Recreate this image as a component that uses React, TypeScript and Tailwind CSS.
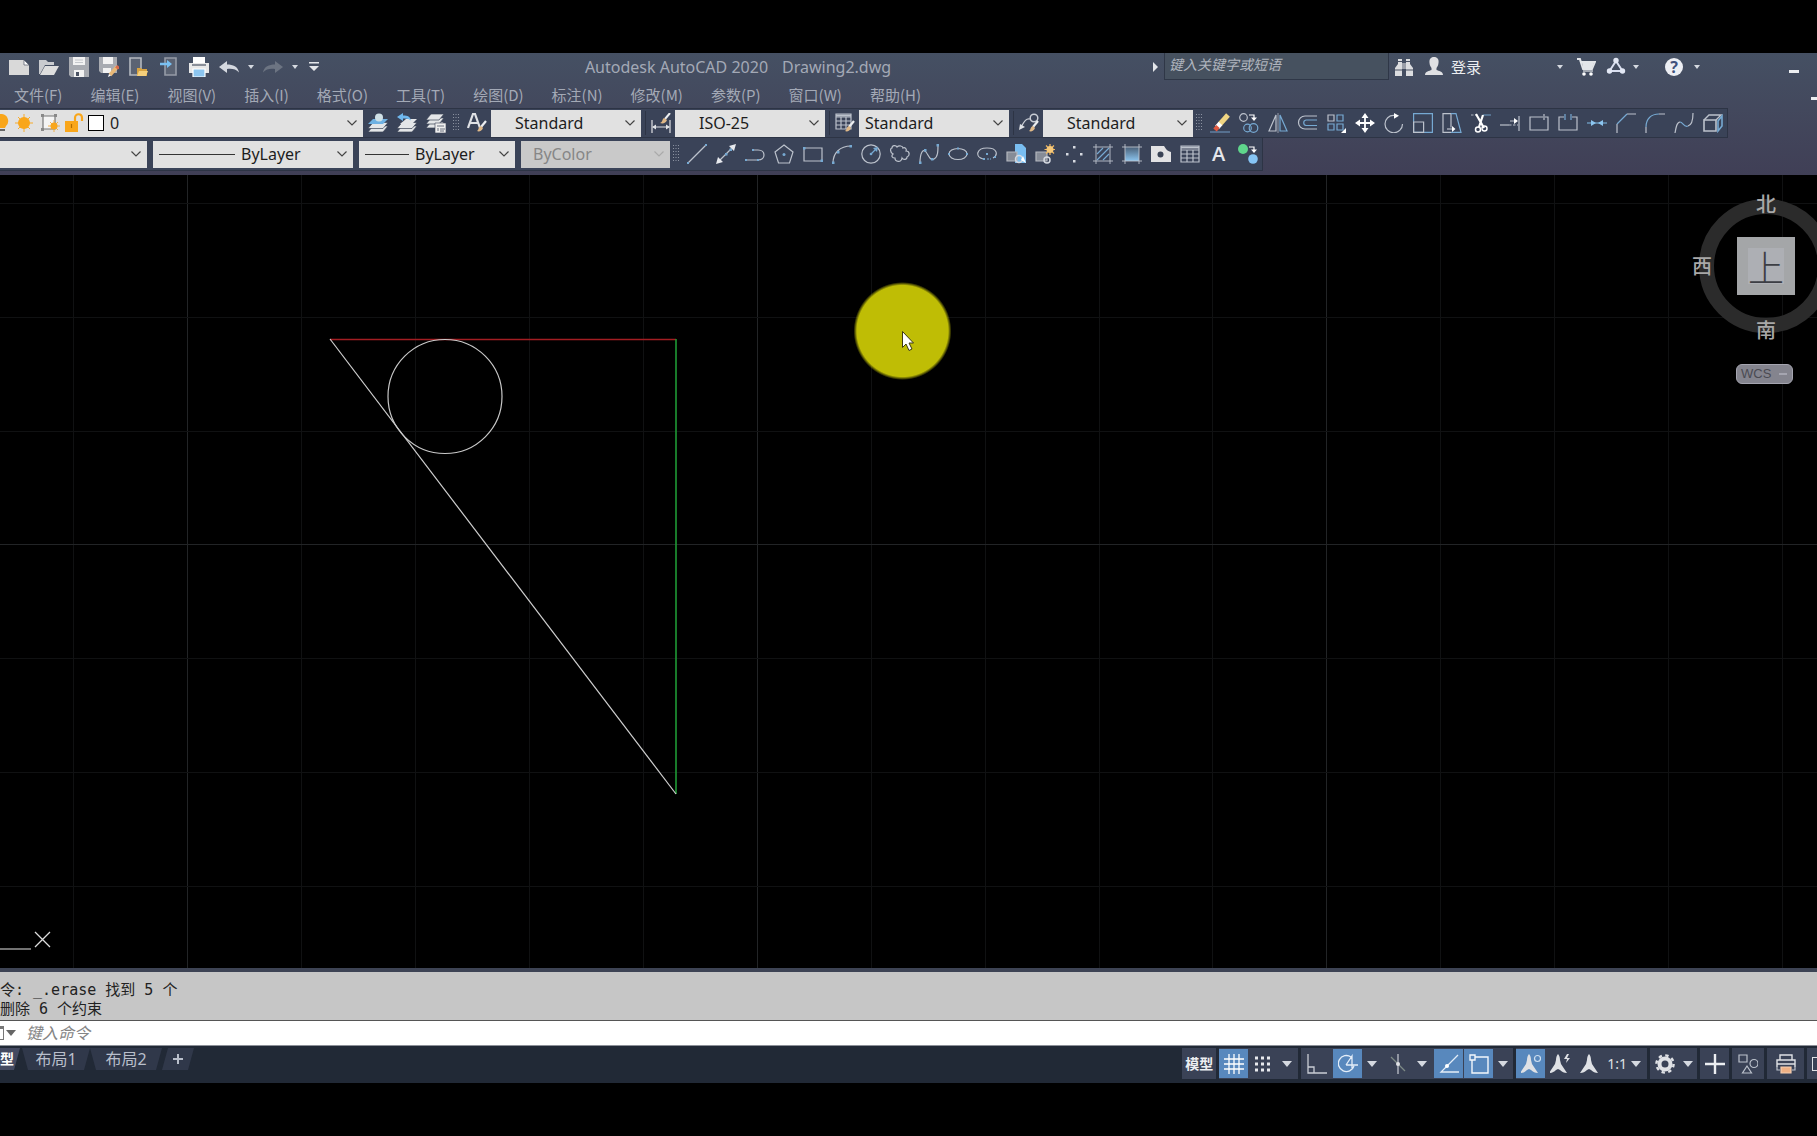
import type { ReactNode } from "react";

const LIGHT = "#bcc2cc";
const BLUE = "#76a9d2";

function Icon({ children, size = "size-5" }: { children: ReactNode; size?: string }) {
  return (
    <svg viewBox="0 0 20 20" className={`${size} shrink-0`} fill="none" stroke={LIGHT} strokeWidth="1.2">
      {children}
    </svg>
  );
}

function Caret() {
  return (
    <svg viewBox="0 0 10 6" className="h-1.5 w-2.5" fill="#d5d9e0">
      <path d="M0 0h10L5 6z" />
    </svg>
  );
}

function SmallCaret() {
  return (
    <svg viewBox="0 0 6 4" className="h-1 w-1.5" fill="#d5d9e0">
      <path d="M0 0h6L3 4z" />
    </svg>
  );
}

const brush = (
  <>
    <path d="M19 8l-5 6" stroke="#eceef0" strokeWidth="2.2" />
    <path d="M14 13l2 2c-1 3-4 4-6 3 2-1 1-4 4-5z" fill="#e0b988" stroke="none" />
  </>
);

const layers = (
  <g fill="#e4e6e8" stroke="#394255" strokeWidth=".7">
    <path d="M5 13h15l-5 6H0z" />
    <path d="M5 9.500h15l-5 6H0z" />
  </g>
);

const quick = [
  {
    name: "新建",
    icon: (
      <Icon>
        <path d="M0 3h15l5 5v10H0z" fill="#d9d9d9" stroke="none" />
        <path d="M15 3v5h5z" fill="#fff" stroke="#394255" strokeWidth=".6" />
      </Icon>
    ),
  },
  {
    name: "打开",
    icon: (
      <Icon>
        <path d="M0 3h7l2 2h6v3H6L1 17H0z" fill="#c9cbcf" stroke="none" />
        <path d="M6 9h14l-5 9H1z" fill="#dedede" stroke="none" />
      </Icon>
    ),
  },
  {
    name: "保存",
    icon: (
      <Icon>
        <path d="M0 0h20v20H2l-2-2z" fill="#a8abb1" stroke="none" />
        <path d="M4 0h12v8H4zM5 13h10v7H5z" fill="#f2f2f2" stroke="none" />
        <path d="M7 15h3v4H7z" fill="#4a5263" stroke="none" />
        <path d="M6 3h8M6 5.500h8" stroke="#b9bcc2" strokeWidth=".8" />
      </Icon>
    ),
  },
  {
    name: "另存为",
    icon: (
      <Icon>
        <path d="M0 0h18v16H2l-2-2z" fill="#a8abb1" stroke="none" />
        <path d="M4 0h10v7H4zM4 11h8v5H4z" fill="#f2f2f2" stroke="none" />
        <path d="M18 10l-7 8" stroke="#e8b877" strokeWidth="3.500" />
        <path d="M19.500 9l-2 2.500" stroke="#d96c4b" strokeWidth="3.500" />
        <path d="M9 20l1-3 2 1.500z" fill="#fff" stroke="none" />
      </Icon>
    ),
  },
  {
    name: "从移动设备打开",
    icon: (
      <Icon>
        <path d="M1 1h11v17H1z" fill="#5b6373" stroke="#b4b8bf" strokeWidth="1.600" />
        <path d="M8 11h4l1 1h5v7H8z" fill="#d9a441" stroke="none" />
        <path d="M10 14h9l-2 5H8z" fill="#f5cf7b" stroke="none" />
      </Icon>
    ),
  },
  {
    name: "保存到移动设备",
    icon: (
      <Icon>
        <path d="M6 1h11v17H6z" fill="#5b6373" stroke="#959ba7" strokeWidth="1.600" />
        <path d="M1 7h8" stroke="#79c0f2" strokeWidth="2.500" />
        <path d="M8 3l5 4-5 4z" fill="#79c0f2" stroke="none" />
      </Icon>
    ),
  },
  {
    name: "打印",
    icon: (
      <Icon>
        <path d="M4 0h12v6H4z" fill="#fff" stroke="none" />
        <path d="M0 6h20v10H0z" fill="#e8e8e8" stroke="none" />
        <path d="M3 8h14" stroke="#4a5263" />
        <path d="M4 12h12v8H4z" fill="#8cc5ef" stroke="#fff" />
      </Icon>
    ),
  },
  {
    name: "放弃",
    icon: (
      <Icon>
        <path d="M0 10l8-6v3.500c6 0 11 2 12 8-3-3.500-7-4-12-3.500V16z" fill="#d5d9e0" stroke="none" />
      </Icon>
    ),
  },
];

const menus = [
  "文件(F)",
  "编辑(E)",
  "视图(V)",
  "插入(I)",
  "格式(O)",
  "工具(T)",
  "绘图(D)",
  "标注(N)",
  "修改(M)",
  "参数(P)",
  "窗口(W)",
  "帮助(H)",
];

const layerTools = [
  {
    name: "将对象的图层置为当前",
    icon: (
      <Icon>
        {layers}
        <path d="M5 6h15l-5 5H0z" fill="#6fb1e2" stroke="none" />
        <circle cx="11" cy="4.500" r="4" fill="#cfe0e6" stroke="none" />
      </Icon>
    ),
  },
  {
    name: "上一个图层",
    icon: (
      <Icon>
        {layers}
        <path d="M9 6h11l-5 5H3z" fill="#e4e6e8" stroke="none" />
        <path d="M0 4l6-4v2.500c5 0 7 1 8 5-3-2-5-2-8-2V8z" fill="#6fb8ee" stroke="none" />
      </Icon>
    ),
  },
  {
    name: "图层特性管理器",
    icon: (
      <Icon>
        <g fill="#e4e6e8" stroke="#394255" strokeWidth=".7">
          <path d="M5 9h13l-5 6H0z" />
          <path d="M5 5h13l-5 6H0z" />
          <path d="M5 1h13l-5 6H0z" />
        </g>
        <path d="M9 10h11v10H9z" fill="#eee" stroke="#394255" strokeWidth=".6" />
        <path d="M11 13h7M12 15v3M14 16h5M14 18h4" stroke="#5b6373" strokeWidth=".9" />
      </Icon>
    ),
  },
];

const modifyTools = [
  {
    name: "删除",
    icon: (
      <Icon>
        <path d="M0 19h20" stroke="#6a8fb5" />
        <path d="M18 2l-8 9" stroke="#f0d582" strokeWidth="5" />
        <path d="M10.500 10.500L7 14.500" stroke="#fff" strokeWidth="5" />
        <path d="M8 13.500L5 17" stroke="#e0583f" strokeWidth="4.500" />
      </Icon>
    ),
  },
  {
    name: "复制",
    icon: (
      <Icon>
        <circle cx="4.500" cy="4.500" r="3.800" />
        <circle cx="8.500" cy="15" r="3.800" stroke={BLUE} />
        <circle cx="14.500" cy="15" r="4.300" stroke={BLUE} />
        <path d="M10 2h5v4" stroke="#fff" />
        <path d="M12 4.500h6L15 8z" fill="#fff" stroke="none" />
      </Icon>
    ),
  },
  {
    name: "镜像",
    icon: (
      <Icon>
        <path d="M8 2v16H1z" />
        <path d="M12 2v16h7z" stroke={BLUE} />
        <path d="M10 0v20" strokeWidth=".7" />
      </Icon>
    ),
  },
  {
    name: "偏移",
    icon: (
      <Icon>
        <path d="M20 3H8a6.500 6.500 0 000 13h12" />
        <path d="M20 7H9a2.800 2.800 0 000 5.500h11" stroke={BLUE} />
      </Icon>
    ),
  },
  {
    name: "阵列",
    icon: (
      <Icon>
        <path d="M2 2h6v6H2z" />
        <path d="M11 2h6v6h-6zM2 11h6v6H2zM11 11h6v6h-6z" stroke={BLUE} />
        <path d="M20 15v5h-5z" fill="#fff" stroke="none" />
      </Icon>
    ),
  },
  {
    name: "移动",
    icon: (
      <Icon>
        <path d="M10 2v16M2 10h16" stroke="#fff" strokeWidth="1.800" />
        <path d="M10 0l3.500 5h-7zM10 20l3.500-5h-7zM0 10l5-3.500v7zM20 10l-5-3.500v7z" fill="#fff" stroke="none" />
      </Icon>
    ),
  },
  {
    name: "旋转",
    icon: (
      <Icon>
        <path d="M10.500 2.500C5 2 1 6 1 11a8.500 8.500 0 0017.500 0" />
        <path d="M10 0l5 2.700-5 3z" fill="#fff" stroke="none" />
      </Icon>
    ),
  },
  {
    name: "缩放",
    icon: (
      <Icon>
        <path d="M.6.6h18.800v18.800H.6z" stroke={BLUE} />
        <path d="M.6 9h10v10.400H.6z" />
      </Icon>
    ),
  },
  {
    name: "拉伸",
    icon: (
      <Icon>
        <path d="M9 .6H1v18.800h8M9 .6v14" />
        <path d="M9 .6h5l5 18.800H9" stroke={BLUE} />
        <path d="M5 16h6" />
        <path d="M10 13l3.500 3-3.500 3z" fill="#fff" stroke="none" />
      </Icon>
    ),
  },
  {
    name: "修剪",
    icon: (
      <Icon>
        <path d="M0 2h8" strokeDasharray="2.500 1.500" strokeWidth=".9" />
        <path d="M12 2h8" strokeWidth=".9" stroke={BLUE} />
        <path d="M5 1l8 14M12 2L8 14" stroke="#fff" strokeWidth="2.200" />
        <circle cx="7" cy="16.500" r="2.500" stroke="#fff" strokeWidth="1.500" />
        <circle cx="13.500" cy="15.500" r="2.500" stroke="#fff" strokeWidth="1.500" />
      </Icon>
    ),
  },
  {
    name: "延伸",
    icon: (
      <Icon>
        <path d="M19 3v15M10 8h5" />
        <path d="M14 5l4 3-4 3z" fill="#fff" stroke="none" />
        <path d="M0 12h9" />
        <path d="M9 12h9" strokeDasharray="2.500 1.500" />
      </Icon>
    ),
  },
  {
    name: "打断于点",
    icon: (
      <Icon>
        <path d="M14 4H1v13h18V4h-3M15 1v6" />
      </Icon>
    ),
  },
  {
    name: "打断",
    icon: (
      <Icon>
        <path d="M6 4H1v13h18V4h-5" />
        <path d="M7 1v6M13 1v6" stroke={BLUE} />
      </Icon>
    ),
  },
  {
    name: "合并",
    icon: (
      <Icon>
        <path d="M0 10h20" stroke={BLUE} />
        <path d="M4 7l5 3-5 3zM16 7l-5 3 5 3z" fill="#8cc5ef" stroke="none" />
      </Icon>
    ),
  },
  {
    name: "倒角",
    icon: (
      <Icon>
        <path d="M1 20v-9M11 1h9" />
        <path d="M1 11L11 1" stroke={BLUE} />
      </Icon>
    ),
  },
  {
    name: "圆角",
    icon: (
      <Icon>
        <path d="M1 20v-6M14 1h6" />
        <path d="M1 14C1 6 6 1 14 1" stroke={BLUE} />
      </Icon>
    ),
  },
  {
    name: "光顺曲线",
    icon: (
      <Icon>
        <path d="M1 20c1-6 2-11 5-11M14 13c4-1 5-6 5-13" />
        <path d="M6 9c3 0 4 6 8 4" stroke={BLUE} />
      </Icon>
    ),
  },
  {
    name: "分解",
    icon: (
      <Icon>
        <path d="M1 7h12v11H1z" strokeWidth="1.600" />
        <path d="M1 7l5-5h12l-5 5" strokeWidth="1.400" />
        <path d="M15 8l4-5v10l-4 5z" stroke={BLUE} strokeWidth="1.600" />
      </Icon>
    ),
  },
];

const drawTools = [
  {
    name: "直线",
    icon: (
      <Icon>
        <path d="M1 19L19 1" />
        <path d="M0 18h2v2H0zM18 0h2v2h-2z" fill={BLUE} stroke="none" />
      </Icon>
    ),
  },
  {
    name: "构造线",
    icon: (
      <Icon>
        <path d="M3 17L17 3" />
        <path d="M20 0l-2 7-5-5zM0 20l2-7 5 5z" fill="#e8eaee" stroke="none" />
        <path d="M9 9h2.500v2.500H9zM13.500 4.500H16V7h-2.500z" fill={BLUE} stroke="none" />
      </Icon>
    ),
  },
  {
    name: "多段线",
    icon: (
      <Icon>
        <path d="M1 16h12c8 0 8-10 0-10H9" />
        <path d="M0 15h2v2H0zM12 15h2v2h-2zM7 5h2v2H7z" fill={BLUE} stroke="none" />
      </Icon>
    ),
  },
  {
    name: "多边形",
    icon: (
      <Icon>
        <path d="M10 1l9 7-3.500 11h-11L1 8z" />
        <circle cx="10" cy="10.500" r="1.500" fill={BLUE} stroke="none" />
      </Icon>
    ),
  },
  {
    name: "矩形",
    icon: (
      <Icon>
        <path d="M1 4h18v13H1z" />
        <path d="M0 3h2.500v2.500H0zM17.500 15.500H20V18h-2.500z" fill={BLUE} stroke="none" />
      </Icon>
    ),
  },
  {
    name: "圆弧",
    icon: (
      <Icon>
        <path d="M1 19C1 9 8 2 19 2" />
        <path d="M0 17.500h2.500V20H0zM5 7h2.500v2.500H5zM17.500 1H20v2.500h-2.500z" fill={BLUE} stroke="none" />
      </Icon>
    ),
  },
  {
    name: "圆",
    icon: (
      <Icon>
        <circle cx="10" cy="10" r="9.200" />
        <path d="M10 10l5-5" stroke={BLUE} />
        <circle cx="10" cy="10" r="1.300" fill={BLUE} stroke="none" />
        <path d="M17 3l-1 5-4-4z" fill={BLUE} stroke="none" />
      </Icon>
    ),
  },
  {
    name: "修订云线",
    icon: (
      <Icon>
        <path d="M3 10C0 9 0 4 2 4c0-3 4-3 5-1 2-2 6-1 6 1 2-1 4 1 3 3 4 0 4 5 1 6 0 3-4 3-5 1-1 5-7 4-7 0-3 0-4-2-2-4z" />
      </Icon>
    ),
  },
  {
    name: "样条曲线",
    icon: (
      <Icon>
        <path d="M1 19C1 9 4 4 7 8s4 9 8 7 4-8 4-14" />
        <path d="M0 17.500h2.500V20H0zM5 5h2.500v2.500H5zM12 14h2.500v2.500H12zM17.500 0H20v2.500h-2.500z" fill={BLUE} stroke="none" />
      </Icon>
    ),
  },
  {
    name: "椭圆",
    icon: (
      <Icon>
        <ellipse cx="10" cy="10" rx="9" ry="5.500" />
        <path d="M0 9h2v2H0zM18 9h2v2h-2zM9 3.500h2v2H9z" fill={BLUE} stroke="none" />
      </Icon>
    ),
  },
  {
    name: "椭圆弧",
    icon: (
      <Icon>
        <path d="M6 15C-2 13-1 4 10 4s11 7 6 10" />
        <path d="M9 9h2v2H9zM17 12h2v2h-2zM6 14h2v2H6z" fill={BLUE} stroke="none" />
        <path d="M10 15h4" stroke={BLUE} strokeDasharray="2 1" />
      </Icon>
    ),
  },
  {
    name: "插入块",
    icon: (
      <Icon>
        <path d="M9 0h7l4 4v15H9z" fill="#79bdf0" stroke="none" />
        <path d="M1 8h10v9H1z" fill="#868c97" stroke="#b4b8bf" />
        <circle cx="13" cy="15" r="3.500" stroke="#d5d9e0" strokeWidth="1.500" />
        <path d="M17 12l3 7-5-3z" fill="#fff" stroke="none" />
      </Icon>
    ),
  },
  {
    name: "创建块",
    icon: (
      <Icon>
        <path d="M1 8h11v9H1z" fill="#868c97" stroke="#b4b8bf" />
        <circle cx="12" cy="16" r="3" stroke="#d5d9e0" strokeWidth="1.500" />
        <path d="M15 0v11M9.500 5.500h11M11 1.500l8 8M19 1.500l-8 8" stroke="#f0b860" />
        <circle cx="15" cy="5.500" r="3.500" fill="#f6c879" stroke="none" />
      </Icon>
    ),
  },
  {
    name: "点",
    icon: (
      <Icon>
        <path d="M9 2h2.500v2.500H9zM2 9h2.500v2.500H2zM16 9h2.500v2.500H16zM9 16h2.500v2.500H9z" fill="#d5d9e0" stroke="none" />
      </Icon>
    ),
  },
  {
    name: "图案填充",
    icon: (
      <Icon>
        <path d="M3 0v20M17 0v20M0 3h20M0 17h20" strokeWidth=".9" />
        <path d="M4 10l6-6M4 16L16 4M10 16l6-6" stroke={BLUE} />
      </Icon>
    ),
  },
  {
    name: "渐变色",
    icon: (
      <Icon>
        <defs>
          <linearGradient id="fade" x1="0" y1="1" x2="0" y2="0">
            <stop offset="0" stopColor="#8cc5ef" />
            <stop offset="1" stopColor="#4a6078" />
          </linearGradient>
        </defs>
        <path d="M3 3h14v14H3z" fill="url(#fade)" stroke="none" />
        <path d="M3 0v20M17 0v20M0 3h20M0 17h20" strokeWidth=".9" />
      </Icon>
    ),
  },
  {
    name: "面域",
    icon: (
      <Icon>
        <path d="M0 2h13c2 3 3 5 7 6v10H0z" fill="#e2e2e4" stroke="none" />
        <circle cx="9.500" cy="10.500" r="3" fill="#394255" stroke="none" />
      </Icon>
    ),
  },
  {
    name: "表格",
    icon: (
      <Icon>
        <path d="M1 2h18v16H1zM1 6h18M1 10h18M1 14h18M7 6v12M13 6v12" />
        <path d="M1 3.500h18" strokeWidth="2" />
      </Icon>
    ),
  },
  { name: "多行文字", icon: <span className="font-['Open_Sans','Noto_Sans',sans-serif] text-xl leading-5 font-semibold text-gray-200">A</span> },
  {
    name: "添加选定对象",
    icon: (
      <Icon>
        <circle cx="5" cy="5" r="5" fill="#5fd68c" stroke="none" />
        <circle cx="15" cy="15" r="4.800" fill="#86c5f5" stroke="none" />
        <path d="M11 3h5v3" stroke="#fff" />
        <path d="M13 5.500h6L16 9z" fill="#fff" stroke="none" />
      </Icon>
    ),
  },
];

function Tool({ name, children }: { name: string; children: ReactNode }) {
  return (
    <button type="button" aria-label={name} className="flex h-7 w-[29px] shrink-0 items-center justify-center">
      {children}
    </button>
  );
}

function Grip() {
  return (
    <svg viewBox="0 0 6 18" className="mx-[3px] h-[18px] w-1.5 shrink-0" fill="#8c93a1">
      {[0, 3, 6, 9, 12, 15].map((y) => (
        <path key={y} d={`M0 ${y}h1v1H0zM2.500 ${y}h1v1h-1zM5 ${y}h1v1H5z`} />
      ))}
    </svg>
  );
}

type ComboProps = {
  label: string;
  value: string;
  width: string;
  pad?: string;
  disabled?: boolean;
  children?: ReactNode;
};

function Combo({ label, value, width, pad = "pl-6", disabled = false, children }: ComboProps) {
  return (
    <div className={`relative flex h-[27px] shrink-0 items-center ${width} ${disabled ? "bg-[#c9c9c9]" : "bg-[#e1e1e1]"}`}>
      {children}
      <select
        aria-label={label}
        disabled={disabled}
        className={`h-full min-w-0 flex-1 appearance-none text-base leading-5 opacity-100 ${pad} ${disabled ? "text-[#868686]" : "text-[#1d1d1d]"}`}
      >
        <option>{value}</option>
      </select>
      <svg
        viewBox="0 0 10 6"
        className="pointer-events-none absolute right-1.5 h-1.5 w-2.5"
        fill="none"
        stroke={disabled ? "#aaa" : "#444"}
        strokeWidth="1.200"
      >
        <path d="M.5.5L5 5 9.500.5" />
      </svg>
    </div>
  );
}

function TitleBar() {
  return (
    <header className="flex h-[27px] items-center pl-1">
      {quick.map((q) => (
        <button key={q.name} type="button" aria-label={q.name} className="flex w-[30px] justify-center">
          {q.icon}
        </button>
      ))}
      <button type="button" aria-label="放弃列表" className="flex w-3.5 justify-center">
        <SmallCaret />
      </button>
      <button type="button" aria-label="重做" className="flex w-[30px] justify-center">
        <Icon>
          <path d="M20 10l-8-6v3.500C6 7.500 1 9.500 0 15.500c3-3.500 7-4 12-3.500V16z" fill="#6c7482" stroke="none" />
        </Icon>
      </button>
      <button type="button" aria-label="重做列表" className="flex w-3.5 justify-center">
        <SmallCaret />
      </button>
      <button type="button" aria-label="自定义快速访问工具栏" className="flex w-6 justify-center">
        <svg viewBox="0 0 10 9" className="h-[9px] w-2.5" fill="#e3e6ea">
          <path d="M0 0h10v1.500H0zM0 4h10L5 9z" />
        </svg>
      </button>

      <h1 className="flex flex-1 justify-center gap-3.5 pl-1 text-base leading-6 whitespace-nowrap text-[#a3a9b6]">
        <span>Autodesk AutoCAD 2020</span>
        <span>Drawing2.dwg</span>
      </h1>

      <button type="button" aria-label="展开搜索" className="flex w-[18px] justify-center">
        <svg viewBox="0 0 5 10" className="h-2.5 w-[5px]" fill="#e3e6ea">
          <path d="M0 0l5 5-5 5z" />
        </svg>
      </button>
      <input
        type="text"
        aria-label="搜索"
        placeholder="键入关键字或短语"
        className="h-full w-[225px] border border-t-0 border-[#2f3747] bg-[#46515f] px-1 pb-1 text-sm italic placeholder:text-[#b0b5be]"
      />
      <button type="button" aria-label="查找" className="flex w-[30px] justify-center">
        <Icon>
          <path d="M4 2h4v17H1v-8l3-4zM12 2h4v5l3 4v8h-7z" fill="#dcdde0" stroke="none" />
          <path d="M8 6h4v6H8z" fill="#9a9ea8" stroke="none" />
          <path d="M1 13h7M12 13h7M4 4.500h4M12 4.500h4" stroke="#4a5263" />
        </Icon>
      </button>
      <button type="button" className="flex w-[134px] items-center gap-[7px] pl-[5px] text-[15px] leading-5 text-[#eceef1]">
        <Icon>
          <path d="M10 0c3.500 0 5 2.500 4.500 6-.3 3-1.500 4-2 5v2c2 1 6.500 1 6.500 5H1c0-4 4.500-4 6.500-5v-2c-.5-1-1.700-2-2-5C5 2.500 6.500 0 10 0z" fill="#dfe0e3" stroke="none" />
        </Icon>
        登录
      </button>
      <button type="button" aria-label="登录列表" className="flex w-3.5 justify-center">
        <SmallCaret />
      </button>
      <button type="button" aria-label="应用商店" className="ml-1 flex w-[30px] justify-center">
        <Icon>
          <path d="M1 2h3l1 3h14l-3 7H7L4 3" fill="none" stroke="#e3e6ea" strokeWidth="1.800" />
          <path d="M6 6h12l-2 5H7z" fill="#e3e6ea" stroke="none" />
          <path d="M7 14h10" stroke="#e3e6ea" />
          <circle cx="8" cy="17" r="1.800" fill="#fff" stroke="none" />
          <circle cx="15" cy="17" r="1.800" fill="#fff" stroke="none" />
        </Icon>
      </button>
      <button type="button" aria-label="保持连接" className="flex w-[30px] justify-center">
        <Icon>
          <path d="M10 4L3.500 14h13z" stroke="#d9dff0" strokeWidth="2" />
          <g fill="#e3e8f5" stroke="none">
            <circle cx="10" cy="3.500" r="2.700" />
            <circle cx="3.500" cy="14" r="2.700" />
            <circle cx="16.500" cy="14" r="2.700" />
          </g>
        </Icon>
      </button>
      <button type="button" aria-label="连接列表" className="flex w-2.5 justify-center">
        <SmallCaret />
      </button>
      <button type="button" aria-label="帮助" className="ml-[18px] flex w-[30px] justify-center">
        <span className="flex size-[18px] items-center justify-center rounded-full bg-[#eceef3] text-base leading-4 font-bold text-[#3f517c]">?</span>
      </button>
      <button type="button" aria-label="帮助列表" className="flex w-4 justify-center">
        <SmallCaret />
      </button>
      <button type="button" aria-label="最小化" className="mt-2.5 mr-3 ml-[78px] flex w-[22px] justify-center">
        <span className="h-[3px] w-2.5 bg-[#eceef1]" />
      </button>
    </header>
  );
}

function StylesBar() {
  return (
    <div className="flex h-[30px] w-fit items-center border-y border-r border-[#2d3445] bg-[#3a4358]">
      <Combo label="图层" value="0" width="w-[363px]" pad="pl-1.5">
        <svg viewBox="0 0 10 20" className="h-5 w-2.5" fill="#f9a61a">
          <path d="M2 1a7 7 0 014 12l-1 2H-2V1z" />
          <path d="M0 16h5v2H0z" fill="#666" />
        </svg>
        <span className="ml-1 flex">
          <Icon>
            <path d="M10 1v18M1 10h18M4 4l12 12M16 4L4 16" stroke="#f9a61a" strokeWidth=".9" />
            <circle cx="10" cy="10" r="6" fill="#f9a61a" stroke="none" />
          </Icon>
        </span>
        <span className="ml-1.5 flex">
          <Icon>
            <path d="M3 3h12v13H3z" fill="#f4f4f4" stroke="#777" />
            <path d="M1 1h3v3H1zM14 1h3v3h-3zM1 15h3v3H1z" fill="#888" stroke="none" />
            <path d="M14 7v12M8 13h12M10 9l8 8M18 9l-8 8" stroke="#f0a83a" strokeWidth=".9" />
            <circle cx="14" cy="13" r="3.500" fill="#f9a61a" stroke="none" />
          </Icon>
        </span>
        <span className="ml-1 flex">
          <Icon>
            <path d="M11 9V5c0-5 7-5 7 0v3" stroke="#f9a61a" strokeWidth="2.200" />
            <path d="M1 8h13v11H1z" fill="#f9a61a" stroke="none" />
            <path d="M7.500 11v4" stroke="#b36d00" />
          </Icon>
        </span>
        <span className="ml-1 size-4 border border-black bg-white" />
      </Combo>
      {layerTools.map((t) => (
        <Tool key={t.name} name={t.name}>
          {t.icon}
        </Tool>
      ))}
      <Grip />
      <Tool name="文字样式">
        <svg viewBox="0 0 20 20" className="size-5" fill="none">
          <path d="M1 15L6 1h2l5 14M3 10h8" stroke="#dfe1e5" strokeWidth="2.200" />
          {brush}
        </svg>
      </Tool>
      <Combo label="文字样式控制" value="Standard" width="w-[150px]" />
      <span className="ml-1 h-6 w-px bg-[#2d3445]" />
      <Tool name="标注样式">
        <Icon>
          <path d="M1 7v13M19 7v13M2 14h16" stroke="#dfe1e5" />
          <path d="M1 14l4-2.500v5zM19 14l-4-2.500v5z" fill="#dfe1e5" stroke="none" />
          <path d="M19 0l-5 6" stroke="#eceef0" strokeWidth="2" />
          <path d="M13 5l3 2c-1 3-4 4-7 3 3-1 2-4 4-5z" fill="#e0b988" stroke="none" />
        </Icon>
      </Tool>
      <Combo label="标注样式控制" value="ISO-25" width="w-[150px]" />
      <span className="ml-1 h-6 w-px bg-[#2d3445]" />
      <Tool name="表格样式">
        <Icon>
          <path d="M1 1h15v15H1zM1 4h15M1 8h15M1 12h15M6 4v12M11 4v12" />
          <path d="M1 2.500h15" strokeWidth="2" />
          {brush}
        </Icon>
      </Tool>
      <Combo label="表格样式控制" value="Standard" width="w-[150px]" pad="pl-1.5" />
      <span className="ml-1 h-6 w-px bg-[#2d3445]" />
      <Tool name="多重引线样式">
        <Icon>
          <circle cx="15" cy="5" r="3.800" stroke="#c9cdd5" strokeWidth="1.500" />
          <path d="M11 6C7 5 5 9 2 14" stroke="#c9cdd5" />
          <path d="M0 17l1-6 5 3z" fill="#dfe1e5" stroke="none" />
          {brush}
        </Icon>
      </Tool>
      <Combo label="多重引线样式控制" value="Standard" width="w-[150px]" />
      <Grip />
      {modifyTools.map((t) => (
        <Tool key={t.name} name={t.name}>
          {t.icon}
        </Tool>
      ))}
    </div>
  );
}

function PropertiesBar() {
  return (
    <div className="flex h-[33px] w-fit items-center border-b border-r border-[#2d3445] bg-[#3a4358]">
      <div className="flex gap-1.5">
        <Combo label="颜色控制" value="" width="w-[147px]" />
        <Combo label="线型控制" value="ByLayer" width="w-[200px]" pad="pl-1.5">
          <span className="ml-1.5 h-px w-[76px] bg-[#333]" />
        </Combo>
        <Combo label="线宽控制" value="ByLayer" width="w-[156px]" pad="pl-1.5">
          <span className="ml-1.5 h-px w-11 bg-[#333]" />
        </Combo>
        <Combo label="打印样式控制" value="ByColor" width="w-[149px]" pad="pl-3" disabled />
      </div>
      <Grip />
      {drawTools.map((t) => (
        <Tool key={t.name} name={t.name}>
          {t.icon}
        </Tool>
      ))}
    </div>
  );
}

// grid spacing 114, every fifth line is a major one
const columns = Array.from({ length: 16 }, (_, i) => ({ x: Math.round(73.4 + i * 113.9), major: i % 5 === 1 }));
const rows = Array.from({ length: 7 }, (_, i) => ({ y: Math.round(28 + i * 113.8), major: i === 3 }));

function ModelSpace() {
  return (
    <main className="relative min-h-0 flex-1 overflow-hidden bg-black">
      <svg className="absolute inset-0 h-full w-full" fill="none">
        <defs>
          <radialGradient id="spot">
            <stop offset="0.93" stopColor="#bfbd05" />
            <stop offset="1" stopColor="#bfbd05" stopOpacity="0" />
          </radialGradient>
        </defs>
        {columns.map((c) => (
          <path key={c.x} d={`M${c.x + 0.5} 0v2000`} stroke={c.major ? "#222426" : "#101112"} />
        ))}
        {rows.map((r) => (
          <path key={r.y} d={`M0 ${r.y + 0.5}h4000`} stroke={r.major ? "#222426" : "#101112"} />
        ))}
        <path d="M330 164.500h346" stroke="#a31d22" strokeWidth="1.400" />
        <path d="M676 164v455" stroke="#1f9a35" strokeWidth="1.600" />
        <path d="M330 164l346 455" stroke="#d0d0d0" strokeWidth="1.200" />
        <circle cx="445" cy="221.500" r="57" stroke="#c8c8c8" strokeWidth="1.200" />
        <path d="M0 774h31" stroke="#999" strokeWidth="1.500" />
        <path d="M35 757l15 15M50 757l-15 15" stroke="#ddd" strokeWidth="1.300" />
        <circle cx="902.500" cy="156" r="49" fill="url(#spot)" />
        <path d="M902.500 156.500v16l3.500-3.500 3 6.500 3-1.500-3-6h4.500z" fill="#fff" stroke="#3d3a12" />
      </svg>

      {/* view cube */}
      <div className="absolute top-6 -right-4 size-[134px] rounded-full border-[15px] border-[#2b2b2b]" />
      <div className="absolute top-[18px] right-[41px] flex w-[84px] flex-col text-xl leading-6 font-medium text-[#a8a8a8]">
        <span className="self-end">北</span>
        <span className="mt-[38px]">西</span>
        <span className="mt-10 self-end">南</span>
      </div>
      <button
        type="button"
        className="absolute top-[62px] right-[22px] flex size-[58px] items-center justify-center bg-[#a4a6a8]"
      >
        <span className="bg-[#adafb4] font-['Noto_Sans_CJK_SC',sans-serif] text-4xl leading-9 font-light text-[#3c3e44]">上</span>
      </button>
      <button
        type="button"
        className="absolute top-[189px] right-6 flex h-5 w-[57px] items-center gap-2 rounded-md border border-[#a5a5b0] bg-[#84848e] pl-1 font-['Liberation_Sans',sans-serif] text-[13px] leading-4 text-[#4a4a52]"
      >
        WCS
        <span className="h-0.5 w-2 bg-[#a5a5b0]" />
      </button>
    </main>
  );
}

function CommandLine() {
  return (
    <section className="border-t-4 border-[#3d4354] bg-[#c6c6c6]">
      <div className="pt-[9px] pb-px font-['DejaVu_Sans_Mono','Noto_Sans_CJK_SC',monospace] text-[15px] leading-[19px] text-[#222]">
        <p>令: _.erase 找到 5 个</p>
        <p>删除 6 个约束</p>
      </div>
      <form className="flex h-[26px] items-center border-y border-[#555] border-b-[#8c9098] bg-white">
        <button type="button" aria-label="最近使用的命令" className="flex w-[22px] items-center gap-0.5">
          <span className="h-3.5 w-1 border-y border-r border-t-[3px] border-[#777]" />
          <svg viewBox="0 0 10 6" className="h-1.5 w-2.5" fill="#666">
            <path d="M0 0h10L5 6z" />
          </svg>
        </button>
        <input
          type="text"
          aria-label="命令行"
          placeholder="键入命令"
          className="h-full min-w-0 flex-1 pl-1 text-base italic placeholder:text-[#858585]"
        />
      </form>
    </section>
  );
}

function Person() {
  return <path d="M10 0c1 1 2 3 2 6l1 4 6 9c-3 0-5-1-7-3l-2-1-2 1c-2 2-4 3-7 3l6-9 1-4c0-3 1-5 2-6z" fill="#dfe1e5" stroke="none" />;
}

const statusOn = "flex h-[29px] w-[29px] items-center justify-center bg-[#5888bd]";
const statusOff = "flex h-[29px] w-[29px] items-center justify-center";
const group = "flex h-[31px] items-center bg-[#3a4256]";

function StatusBar() {
  return (
    <footer className="flex h-[37px] items-start justify-between bg-[#212936] pt-0.5">
      <nav className="flex text-base leading-[22px] text-[#b9bfcb]">
        <button type="button" className="h-[22px] w-5 bg-[#444a61] text-left text-sm leading-[22px] font-bold text-white [clip-path:polygon(0_0,100%_0,14px_100%,0_100%)]">
          型
        </button>
        <button type="button" className="ml-0.5 h-[22px] w-[68px] bg-[#30384a] [clip-path:polygon(0_0,100%_0,62px_100%,6px_100%)]">
          布局1
        </button>
        <button type="button" className="h-[22px] w-[72px] bg-[#30384a] [clip-path:polygon(0_0,100%_0,66px_100%,6px_100%)]">
          布局2
        </button>
        <button type="button" aria-label="新建布局" className="flex h-[22px] w-8 items-center justify-center bg-[#30384a] [clip-path:polygon(6px_0,100%_0,26px_100%,0_100%)]">
          <svg viewBox="0 0 10 10" className="size-2.5" stroke="#b9bfcb" strokeWidth="2">
            <path d="M5 0v10M0 5h10" />
          </svg>
        </button>
      </nav>

      <div className="flex gap-[3px]">
        <div className={group}>
          <button type="button" className="h-full px-[3px] text-sm leading-5 font-bold text-[#eceef1]">
            模型
          </button>
        </div>
        <div className={group}>
          <button type="button" aria-label="栅格" className={statusOn}>
            <Icon>
              <path d="M5 0v20M10 0v20M15 0v20M0 5h20M0 10h20M0 15h20" stroke="#fff" strokeWidth="1.300" />
            </Icon>
          </button>
          <button type="button" aria-label="捕捉" className="flex w-7 justify-center">
            <Icon>
              <path d="M3 4h15M3 10h15M3 16h15" stroke="#e8eaee" strokeWidth="3" strokeDasharray="3 3" />
            </Icon>
          </button>
          <button type="button" aria-label="捕捉设置" className="flex w-[22px] justify-center">
            <Caret />
          </button>
        </div>
        <div className={group}>
          <button type="button" aria-label="正交" className="flex w-8 justify-center">
            <Icon>
              <path d="M1 0v19h19M1 13h6v6" stroke="#c9cdd5" strokeWidth="1.300" />
            </Icon>
          </button>
          <button type="button" aria-label="极轴追踪" className={statusOn}>
            <Icon>
              <path d="M13 3a8 8 0 103 9M8 11h12M8 11l6-9v12" stroke="#e3edf8" strokeWidth="1.300" />
            </Icon>
          </button>
          <button type="button" aria-label="极轴设置" className="flex w-5 justify-center">
            <Caret />
          </button>
          <button type="button" aria-label="等轴测草图" className="flex w-8 justify-center">
            <Icon>
              <path d="M10 0v20" stroke="#c9cdd5" />
              <path d="M3 3l14 14" stroke="#7d8a86" />
              <circle cx="10" cy="10" r="2" fill="#dfe1e5" stroke="none" />
            </Icon>
          </button>
          <button type="button" aria-label="等轴测设置" className="mr-1 flex w-4 justify-center">
            <Caret />
          </button>
          <button type="button" aria-label="对象捕捉追踪" className={statusOn}>
            <Icon>
              <path d="M19 1L2 18h18" stroke="#e3edf8" strokeWidth="1.300" />
              <circle cx="8" cy="12" r="2" fill="#fff" stroke="none" />
            </Icon>
          </button>
          <button type="button" aria-label="对象捕捉" className="ml-px flex h-[29px] w-[29px] items-center justify-center bg-[#5888bd]">
            <Icon>
              <path d="M6 3h13v16H3V6M1 1h5v5H1z" stroke="#f3f7fb" strokeWidth="1.400" />
            </Icon>
          </button>
          <button type="button" aria-label="对象捕捉设置" className="flex w-5 justify-center">
            <Caret />
          </button>
        </div>
        <div className={group}>
          <button type="button" aria-label="显示注释对象" className={statusOn}>
            <Icon>
              <g transform="translate(-2 0)">
                <Person />
              </g>
              <circle cx="16.500" cy="4.500" r="3" stroke="#cfe0f2" />
            </Icon>
          </button>
          <button type="button" aria-label="自动缩放" className={statusOff}>
            <Icon>
              <g transform="translate(-2 0)">
                <Person />
              </g>
              <path d="M17 0l-3 5h3l-1 4 4-5h-3l2-4z" fill="#dfe1e5" stroke="none" />
            </Icon>
          </button>
          <button type="button" aria-label="注释比例" className={statusOff}>
            <Icon>
              <Person />
            </Icon>
          </button>
          <button type="button" className="flex items-center gap-1 pr-1.5 pl-1 text-sm leading-5 text-[#dfe1e5]">
            1:1
            <Caret />
          </button>
        </div>
        <div className={group}>
          <button type="button" aria-label="切换工作空间" className={statusOff}>
            <Icon>
              <circle cx="10" cy="10" r="5.500" stroke="#dfe1e5" strokeWidth="4" />
              <circle cx="10" cy="10" r="8.600" stroke="#dfe1e5" strokeWidth="2.400" strokeDasharray="3.400 3.350" />
            </Icon>
          </button>
          <button type="button" aria-label="工作空间列表" className="flex w-[18px] justify-center">
            <Caret />
          </button>
        </div>
        <div className={group}>
          <button type="button" aria-label="注释监视器" className={statusOff}>
            <Icon>
              <path d="M10 0v20M0 10h20" stroke="#eceef1" strokeWidth="2.400" />
            </Icon>
          </button>
        </div>
        <div className={group}>
          <button type="button" aria-label="隔离对象" className="flex w-8 justify-center">
            <Icon>
              <path d="M1 1h8v7H1zM9 12l4.500 7h-9z" />
              <circle cx="16" cy="9.500" r="4" />
            </Icon>
          </button>
        </div>
        <div className={group}>
          <button type="button" aria-label="图形特性" className="flex w-[37px] justify-center">
            <Icon>
              <path d="M4 6V1h12v5M1 13V6h18v7M1 10h18" stroke="#dfe1e5" strokeWidth="1.400" />
              <path d="M5 13h10v6H5z" fill="#efb084" stroke="#f5cdb0" />
              <path d="M1 13v3h3M19 13v3h-3" />
            </Icon>
          </button>
        </div>
        <div className={group}>
          <button type="button" aria-label="全屏显示" className="flex w-2.5 justify-end">
            <span className="h-3.5 w-[5px] border-y border-l border-[#dfe1e5]" />
          </button>
        </div>
      </div>
    </footer>
  );
}

export default function App() {
  return (
    <div className="h-screen overflow-hidden bg-black py-[53px] font-['Noto_Sans','Noto_Sans_CJK_SC',sans-serif]">
      <div className="flex h-full flex-col">
        <div className="bg-linear-to-b from-[#455063] to-[#403f56] pb-1">
          <TitleBar />
          <div className="flex h-7 items-center justify-between pt-0.5">
            <nav className="flex gap-7 pl-3.5 font-['Noto_Sans_CJK_SC',sans-serif] text-[15px] leading-5 text-[#a3a9b6]">
              {menus.map((m) => (
                <button key={m} type="button">
                  {m}
                </button>
              ))}
            </nav>
            <button type="button" aria-label="最小化图形" className="mt-1.5 flex w-1.5">
              <span className="h-[3px] w-full bg-[#eceef1]" />
            </button>
          </div>
          <StylesBar />
          <PropertiesBar />
        </div>
        <ModelSpace />
        <CommandLine />
        <StatusBar />
      </div>
    </div>
  );
}
